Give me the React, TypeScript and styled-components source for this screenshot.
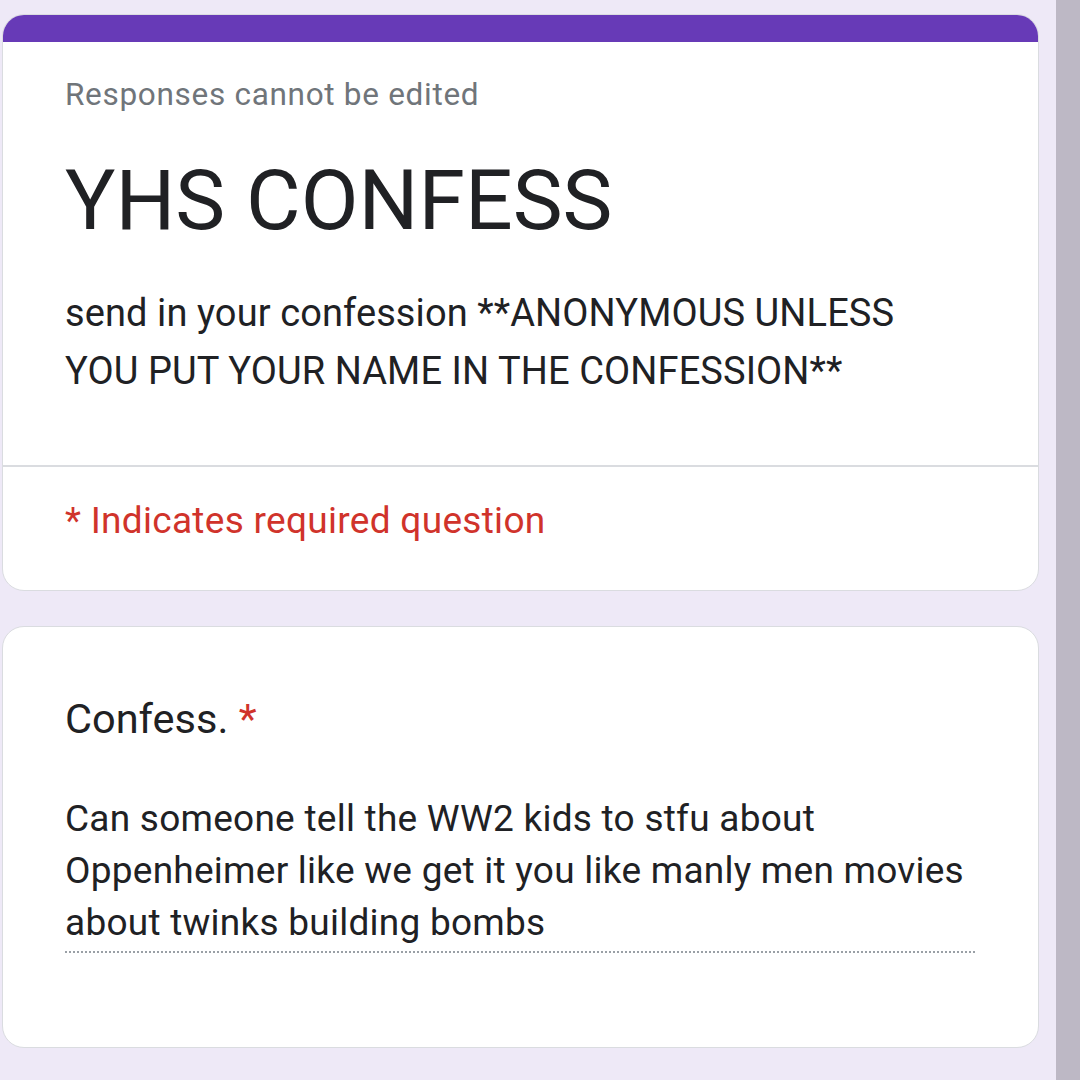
import React from "react";
import styled, { createGlobalStyle } from "styled-components";

const Global = createGlobalStyle`
  html, body { margin: 0; padding: 0; }
  body { background: #eee9f7; font-family: Roboto, "Noto Sans", sans-serif; }
`;

const Page = styled.div`
  width: 1080px;
  height: 1080px;
  display: flex;
  overflow: hidden;
  background: #eee9f7;
`;

const Column = styled.div`
  flex: 0 0 1037px;
  margin-left: 2px;
  padding-top: 14px;
  display: flex;
  flex-direction: column;
  gap: 35px;
`;

const Scrollbar = styled.div`
  margin-left: auto;
  width: 24px;
  height: 100%;
  background: #bdb8c5;
`;

const Card = styled.div<{ $h: number }>`
  height: ${(p) => p.$h}px;
  background: #fff;
  border: 1px solid #dadce0;
  border-radius: 22px;
  overflow: hidden;
  box-sizing: border-box;
  display: flex;
  flex-direction: column;
`;

const TopBar = styled.div`
  height: 27px;
  flex: 0 0 27px;
  background: #673ab7;
`;

const Header = styled.div`
  height: 423px;
  box-sizing: border-box;
  padding: 33px 62px 0 62px;
`;

const Section = styled.div<{ $pt: number }>`
  padding: ${(p) => p.$pt}px 62px 0 62px;
`;

const Divider = styled.div`
  height: 2px;
  background: #dadce0;
`;

const Note = styled.div`
  font-size: 31.5px;
  color: #70757a;
  letter-spacing: 0.7px;
  line-height: 40px;
`;

const Title = styled.h1`
  margin: 31px 0 0 0;
  font-weight: 400;
  font-size: 84px;
  line-height: 110px;
  color: #202124;
`;

const Desc = styled.p`
  margin: 28px 0 0 0;
  font-size: 38px;
  line-height: 58px;
  color: #202124;
  letter-spacing: 0.1px;
`;

const Required = styled.div`
  font-size: 37px;
  line-height: 44px;
  color: #d0332b;
  letter-spacing: 0.3px;
`;

const Question = styled.div`
  font-size: 41.5px;
  line-height: 50px;
  color: #202124;
`;

const Star = styled.span`
  color: #d0332b;
`;

const Answer = styled.div`
  margin-top: 49px;
  font-size: 37px;
  line-height: 52px;
  color: #202124;
  letter-spacing: 0.25px;
  padding-bottom: 2px;
  width: 910px;
  border-bottom: 2px dotted #9aa0a6;
`;

export default function App() {
  return (
    <>
      <Global />
      <Page>
        <Column>
          <Card $h={577}>
            <TopBar />
            <Header>
              <Note>Responses cannot be edited</Note>
              <Title>YHS CONFESS</Title>
              <Desc>
                send in your confession **ANONYMOUS UNLESS YOU PUT YOUR NAME IN THE CONFESSION**
              </Desc>
            </Header>
            <Divider />
            <Section $pt={32}>
              <Required>* Indicates required question</Required>
            </Section>
          </Card>
          <Card $h={422}>
            <Section $pt={67}>
              <Question>
                Confess. <Star>*</Star>
              </Question>
              <Answer>
                Can someone tell the WW2 kids to stfu about Oppenheimer like we get it you like manly men movies about twinks building bombs
              </Answer>
            </Section>
          </Card>
        </Column>
        <Scrollbar />
      </Page>
    </>
  );
}
